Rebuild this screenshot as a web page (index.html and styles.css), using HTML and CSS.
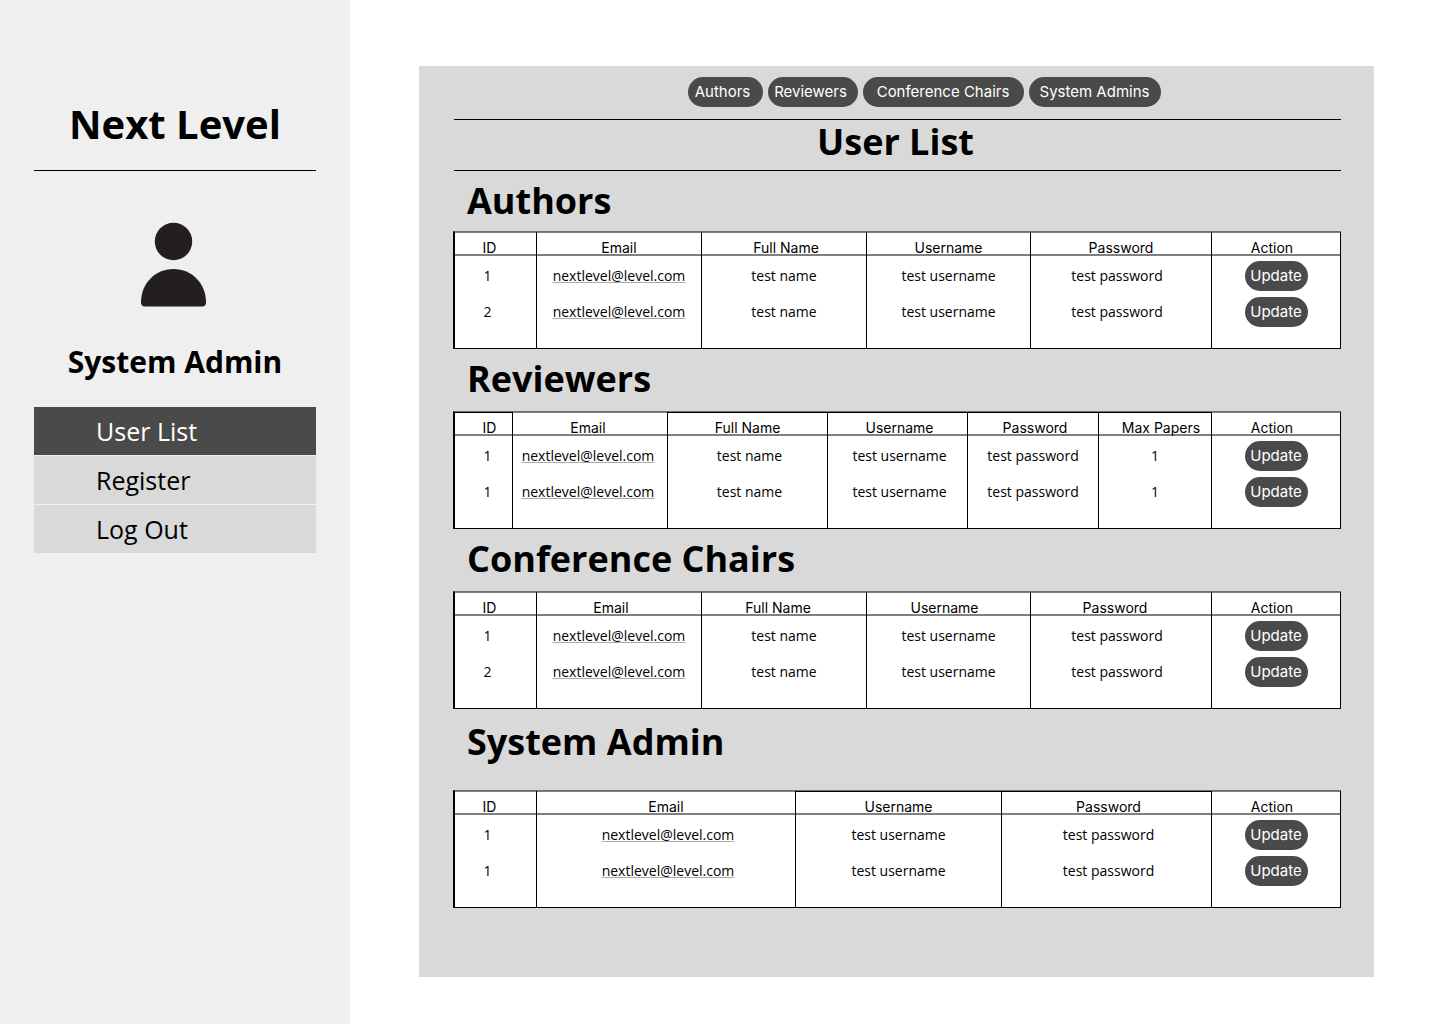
FILE: index.html
```html
<!DOCTYPE html>
<html lang="en">
<head>
<meta charset="utf-8">
<meta name="viewport" content="width=device-width, initial-scale=1">
<title>Next Level – User List</title>
<link rel="stylesheet" href="styles.css">
</head>
<body>
<div class="app">
  <aside class="sidebar">
    <div class="brand">Next Level</div>
    <svg class="avatar" viewBox="0 0 68 86" aria-hidden="true">
      <circle cx="32.500" cy="19.500" r="18.700"/>
      <path d="M32.500 47C14 47 0 61.500 0 80.500Q0 84.500 4 84.500H61Q65 84.500 65 80.500C65 61.500 51 47 32.500 47Z"/>
    </svg>
    <div class="role">System Admin</div>
    <nav class="menu">
      <a class="menu-item active" href="#users">User List</a>
      <a class="menu-item" href="#register">Register</a>
      <a class="menu-item" href="#logout">Log Out</a>
    </nav>
  </aside>

  <main class="panel" id="users">
    <div class="filters">
      <button class="pill pill-authors" type="button">Authors</button>
      <button class="pill pill-reviewers" type="button">Reviewers</button>
      <button class="pill pill-chairs" type="button">Conference Chairs</button>
      <button class="pill pill-admins" type="button">System Admins</button>
    </div>
    <h1 class="title">User List</h1>

    <section class="group group-first">
      <h2 class="group-title">Authors</h2>
      <table class="users">
        <colgroup><col class="w-82"><col class="w-165"><col class="w-165"><col class="w-164"><col class="w-181"><col class="w-129"></colgroup>
        <thead>
          <tr><th class="end-m">ID</th><th>Email</th><th class="start-xs">Full Name</th><th>Username</th><th>Password</th><th class="end-s">Action</th></tr>
        </thead>
        <tbody>
          <tr><td class="end-l">1</td><td><a class="mail" href="mailto:nextlevel@level.com">nextlevel@level.com</a></td><td>test name</td><td>test username</td><td class="end-s">test password</td><td><button class="pill update" type="button">Update</button></td></tr>
          <tr><td class="end-l">2</td><td><a class="mail" href="mailto:nextlevel@level.com">nextlevel@level.com</a></td><td>test name</td><td>test username</td><td class="end-s">test password</td><td><button class="pill update" type="button">Update</button></td></tr>
        </tbody>
      </table>
    </section>

    <section class="group">
      <h2 class="group-title">Reviewers</h2>
      <table class="users">
        <colgroup><col class="w-58"><col class="w-155"><col class="w-160"><col class="w-140"><col class="w-131"><col class="w-113"><col class="w-129"></colgroup>
        <thead>
          <tr><th class="start-m ruled">ID</th><th class="end-xs">Email</th><th class="ruled">Full Name</th><th class="start-xs ruled">Username</th><th class="start-xs ruled">Password</th><th class="start-m ruled">Max Papers</th><th class="end-s">Action</th></tr>
        </thead>
        <tbody>
          <tr><td class="start-s">1</td><td class="end-xs"><a class="mail" href="mailto:nextlevel@level.com">nextlevel@level.com</a></td><td class="start-xs">test name</td><td class="start-xs">test username</td><td>test password</td><td>1</td><td><button class="pill update" type="button">Update</button></td></tr>
          <tr><td class="start-s">1</td><td class="end-xs"><a class="mail" href="mailto:nextlevel@level.com">nextlevel@level.com</a></td><td class="start-xs">test name</td><td class="start-xs">test username</td><td>test password</td><td>1</td><td><button class="pill update" type="button">Update</button></td></tr>
        </tbody>
      </table>
    </section>

    <section class="group">
      <h2 class="group-title">Conference Chairs</h2>
      <table class="users">
        <colgroup><col class="w-82"><col class="w-165"><col class="w-165"><col class="w-164"><col class="w-181"><col class="w-129"></colgroup>
        <thead>
          <tr><th class="end-m">ID</th><th class="end-l">Email</th><th class="end-m">Full Name</th><th class="end-s">Username</th><th class="end-m">Password</th><th class="end-s">Action</th></tr>
        </thead>
        <tbody>
          <tr><td class="end-l">1</td><td><a class="mail" href="mailto:nextlevel@level.com">nextlevel@level.com</a></td><td>test name</td><td>test username</td><td class="end-s">test password</td><td><button class="pill update" type="button">Update</button></td></tr>
          <tr><td class="end-l">2</td><td><a class="mail" href="mailto:nextlevel@level.com">nextlevel@level.com</a></td><td>test name</td><td>test username</td><td class="end-s">test password</td><td><button class="pill update" type="button">Update</button></td></tr>
        </tbody>
      </table>
    </section>

    <section class="group group-spaced">
      <h2 class="group-title">System Admin</h2>
      <table class="users">
        <colgroup><col class="w-82"><col class="w-259"><col class="w-206"><col class="w-210"><col class="w-129"></colgroup>
        <thead>
          <tr><th class="end-m">ID</th><th>Email</th><th class="ruled">Username</th><th class="start-xs ruled">Password</th><th class="end-s">Action</th></tr>
        </thead>
        <tbody>
          <tr><td class="end-l">1</td><td class="start-xs"><a class="mail" href="mailto:nextlevel@level.com">nextlevel@level.com</a></td><td>test username</td><td class="start-xs">test password</td><td><button class="pill update" type="button">Update</button></td></tr>
          <tr><td class="end-l">1</td><td class="start-xs"><a class="mail" href="mailto:nextlevel@level.com">nextlevel@level.com</a></td><td>test username</td><td class="start-xs">test password</td><td><button class="pill update" type="button">Update</button></td></tr>
        </tbody>
      </table>
    </section>
  </main>
</div>
</body>
</html>
```
FILE: styles.css
```css
*, *::before, *::after { box-sizing: border-box; }

body {
  margin: 0;
  background: #fff;
  color: #000;
  font-family: "Open Sans", "Noto Sans", sans-serif;
}

.app {
  display: flex;
  min-height: 100vh;
}

/* Sidebar */
.sidebar {
  flex: 0 0 350px;
  display: flex;
  flex-direction: column;
  padding: 96px 34px 0;
  background: #efefef;
  text-align: center;
}

.brand {
  padding-bottom: 18px;
  border-bottom: 1px solid #000;
  font-size: 40px;
  font-weight: 700;
  line-height: 56px;
}

.avatar {
  width: 68px;
  height: 86px;
  margin: 51px auto 33px;
  fill: #231f20;
}

.role {
  font-size: 30px;
  font-weight: 700;
  line-height: 42px;
}

.menu {
  display: grid;
  gap: 1px;
  margin-top: 24px;
}

.menu-item {
  padding-left: 62px;
  background: #d9d9d9;
  color: #000;
  font-size: 25px;
  line-height: 48px;
  text-align: left;
  text-decoration: none;
}

.menu-item.active {
  background: #4a4a4a;
  color: #fff;
}

/* Main panel */
.panel {
  flex: 1;
  min-width: 0;
  margin: 66px 66px 47px 69px;
  padding: 11px 33px 69px 34px;
  background: #d9d9d9;
}

.filters {
  display: flex;
  justify-content: center;
  gap: 5px;
  margin-bottom: 12px;
  padding-left: 54px;
}

.pill {
  height: 30px;
  padding: 0;
  border: 0;
  border-radius: 15px;
  background: #4a4a4a;
  color: #fff;
  font-family: Inter, sans-serif;
  font-size: 15px;
  line-height: 30px;
}

.pill-authors { width: 75px; padding-right: 5px; }
.pill-reviewers { width: 90px; padding-right: 4px; }
.pill-chairs { width: 161px; }
.pill-admins { width: 132px; }
.update { width: 63px; }

.title {
  margin: 0 0 0 1px;
  border-top: 1px solid #000;
  border-bottom: 1px solid #000;
  font-size: 36px;
  font-weight: 700;
  line-height: 44px;
  padding: 0 4px 6px 0;
  text-align: center;
}

.group-title {
  margin: 0;
  padding: 6px 0 8px 14px;
  font-size: 36px;
  font-weight: 700;
  line-height: 48px;
}

.group-first .group-title { padding-bottom: 6px; }
.group-spaced .group-title { padding: 9px 0 24px 14px; }

/* User tables */
.users {
  width: 100%;
  table-layout: fixed;
  border-collapse: separate;
  border-spacing: 0;
  border-top: 1px solid #6e6e6e;
  border-bottom: 1px solid #000;
  border-left: 2px solid #000;
  background: #fff;
  font-size: 14px;
  text-align: center;
}

.users th,
.users td {
  border-right: 1px solid #000;
  padding: 0;
}

.users th {
  height: 24px;
  padding-top: 8px;
  box-shadow: inset 0 1px #808080, inset 0 -2px #808080;
  font-family: Inter, sans-serif;
  font-weight: 400;
  line-height: 16px;
}

.users th.ruled { box-shadow: inset 0 1px #000, inset 0 -2px #808080; }

.users td {
  padding-top: 5px;
  padding-bottom: 1px;
  line-height: 30px;
  vertical-align: top;
}

.users tbody tr:last-child td { padding-bottom: 21px; }

.users .update { display: block; margin: 0 auto; }

.users .start-xs { padding-left: 4px; }
.users .start-s { padding-left: 8px; }
.users .start-m { padding-left: 12px; }
.users .end-xs { padding-right: 4px; }
.users .end-s { padding-right: 8px; }
.users .end-m { padding-right: 12px; }
.users .end-l { padding-right: 16px; }

.mail {
  color: inherit;
  text-decoration: underline;
  text-decoration-color: #aaa;
}

.w-58 { width: 58px; }
.w-82 { width: 82px; }
.w-113 { width: 113px; }
.w-129 { width: 129px; }
.w-131 { width: 131px; }
.w-140 { width: 140px; }
.w-155 { width: 155px; }
.w-160 { width: 160px; }
.w-164 { width: 164px; }
.w-165 { width: 165px; }
.w-181 { width: 181px; }
.w-206 { width: 206px; }
.w-210 { width: 210px; }
.w-259 { width: 259px; }
```
